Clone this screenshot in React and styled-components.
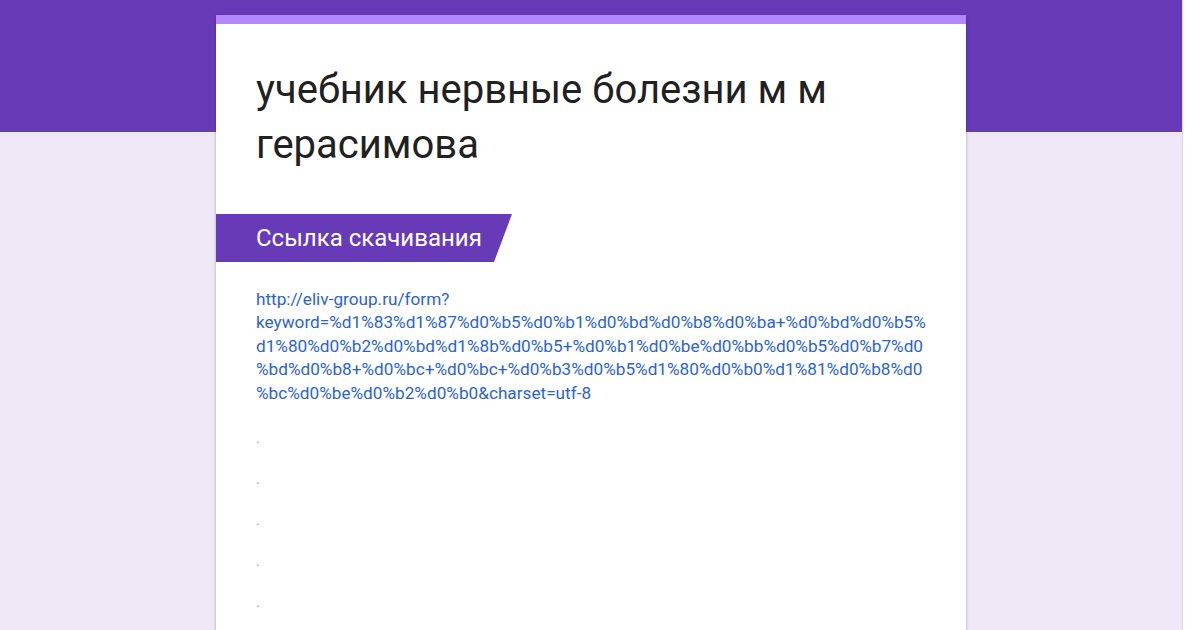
import React from "react";
import styled, { createGlobalStyle } from "styled-components";

const GlobalStyle = createGlobalStyle`
  html, body { margin: 0; padding: 0; }
  body { font-family: Roboto, "Noto Sans", Arial, sans-serif; }
`;

const Page = styled.div`
  display: flex;
  width: 1200px;
  height: 630px;
  overflow: hidden;
`;

const Main = styled.div`
  flex: 1;
  display: flex;
  justify-content: center;
  align-items: flex-start;
  background: linear-gradient(#673ab7 0, #673ab7 132px, #ede7f6 132px, #ede7f6 100%);
`;

const ScrollStrip = styled.div`
  width: 17px;
  background: #ffffff;
  border-left: 1px solid #d8d8d8;
`;

const Card = styled.div`
  width: 750px;
  margin-top: 15px;
  min-height: 700px;
  background: #ffffff;
  border-top: 9px solid #b388ff;
  box-shadow: 0 1px 3px rgba(0, 0, 0, 0.28);
  display: flex;
  flex-direction: column;
`;

const Title = styled.h1`
  margin: 38px 40px 0;
  font-size: 40px;
  font-weight: 400;
  line-height: 55px;
  color: #212121;
`;

const SectionBanner = styled.div`
  margin-top: 42px;
  width: 296px;
  height: 48px;
  box-sizing: border-box;
  padding-left: 40px;
  display: flex;
  align-items: center;
  background: #673ab7;
  color: #ffffff;
  font-size: 24px;
  clip-path: polygon(0 0, 100% 0, calc(100% - 18px) 100%, 0 100%);
`;

const Link = styled.a`
  display: block;
  margin: 26px 40px 0;
  color: #2b63d4;
  font-size: 17.2px;
  line-height: 23.4px;
  text-decoration: none;
`;

const Dots = styled.div`
  display: flex;
  flex-direction: column;
  margin: 24px 40px 0;
  gap: 23px;
`;

const Dot = styled.div`
  font-size: 14px;
  line-height: 18px;
  color: #9e9e9e;
`;

const linkLines = [
  "http://eliv-group.ru/form?",
  "keyword=%d1%83%d1%87%d0%b5%d0%b1%d0%bd%d0%b8%d0%ba+%d0%bd%d0%b5%",
  "d1%80%d0%b2%d0%bd%d1%8b%d0%b5+%d0%b1%d0%be%d0%bb%d0%b5%d0%b7%d0",
  "%bd%d0%b8+%d0%bc+%d0%bc+%d0%b3%d0%b5%d1%80%d0%b0%d1%81%d0%b8%d0",
  "%bc%d0%be%d0%b2%d0%b0&charset=utf-8",
];

export default function App() {
  return (
    <>
      <GlobalStyle />
      <Page>
        <Main>
          <Card>
            <Title>
              учебник нервные болезни м м
              <br />
              герасимова
            </Title>
            <SectionBanner>Ссылка скачивания</SectionBanner>
            <Link href="#">
              {linkLines.map((l, i) => (
                <React.Fragment key={i}>
                  {l}
                  {i < linkLines.length - 1 && <br />}
                </React.Fragment>
              ))}
            </Link>
            <Dots>
              {[0, 1, 2, 3, 4].map((i) => (
                <Dot key={i}>.</Dot>
              ))}
            </Dots>
          </Card>
        </Main>
        <ScrollStrip />
      </Page>
    </>
  );
}
